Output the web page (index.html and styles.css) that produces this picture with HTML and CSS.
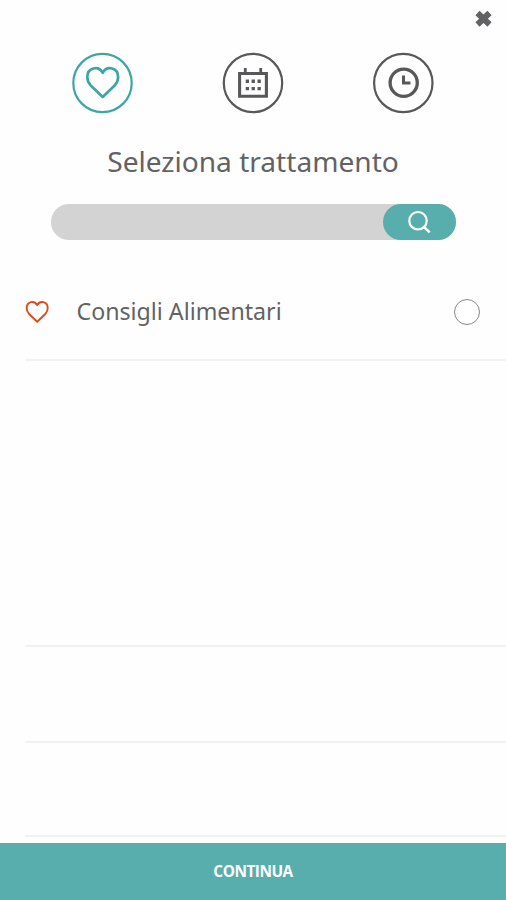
FILE: index.html
```html
<!DOCTYPE html>
<html lang="it">
<head>
<meta charset="utf-8">
<title>Seleziona trattamento</title>
<link rel="stylesheet" href="styles.css">
</head>
<body>
<div class="screen">
  <header class="topbar">
    <button class="close" aria-label="Chiudi">
      <svg width="18" height="18" viewBox="0 0 18 18"><path d="M3.5 3L15.5 14.5M15.5 3L3.5 14.5" fill="none" stroke="currentColor" stroke-width="6"/></svg>
    </button>
  </header>
  <nav class="steps">
    <div class="step active">
      <svg width="80" height="80" viewBox="0 0 80 80"><circle cx="40.5" cy="40" r="29.2" stroke-width="2.2"/><path d="M40.7 54L28.5 42.2C26.4 39.8 25.3 37.2 25.3 34C25.3 24.6 36.4 22.2 40.7 29.8C45 22.2 56.1 24.6 56.1 34C56.1 37.2 55 39.8 52.9 42.2Z" stroke-width="2.7" stroke-linejoin="round"/></svg>
    </div>
    <div class="step">
      <svg width="80" height="80" viewBox="0 0 80 80"><circle cx="40" cy="40" r="29.2" stroke-width="2.2"/><path d="M26.6 30.5H53.4V53.2H26.6Z" stroke-width="3.1"/><path d="M32.3 25V31M47.7 25V31" stroke-width="2.8"/><path d="M32.7 38.2H47.8M32.7 45.6H47.8" stroke-width="3.4" stroke-dasharray="3.3 2.6"/></svg>
    </div>
    <div class="step">
      <svg width="80" height="80" viewBox="0 0 80 80"><circle cx="40.3" cy="40" r="29.2" stroke-width="2.2"/><circle cx="40.7" cy="39.8" r="13.6" stroke-width="3.3"/><path d="M40.5 32.5V40H47.5" stroke-width="3"/></svg>
    </div>
  </nav>
  <h1 class="title">Seleziona trattamento</h1>
  <form class="search">
    <input class="search-input" type="text" aria-label="Cerca">
    <button class="search-button" type="button" aria-label="Cerca">
      <svg width="26" height="26" viewBox="0 0 26 26" fill="none" stroke="currentColor" stroke-width="2.2"><circle cx="11" cy="11.7" r="8.7"/><path d="M17 18L22.7 23.4" stroke-width="2.5"/></svg>
    </button>
  </form>
  <main class="list">
    <label class="row first">
      <svg class="heart" width="26" height="26" viewBox="0 0 26 26"><path d="M13.2 22.8L4.9 14.7C3.4 13 2.7 11.2 2.7 9C2.7 2.4 10.3 1 13.2 5.9C16.1 1 23.7 2.4 23.7 9C23.7 11.2 23 13 21.5 14.7Z" fill="none" stroke="currentColor" stroke-width="1.9" stroke-linejoin="round"/></svg>
      <span class="name">Consigli Alimentari</span>
      <input class="radio" type="radio">
    </label>
    <div class="row tall"></div>
    <div class="row middle"></div>
    <div class="row last"></div>
  </main>
  <button class="continue">CONTINUA</button>
</div>
</body>
</html>
```
FILE: styles.css
```css
* { box-sizing: border-box; }
body { margin: 0; background: #fefefe; color: #626264; font-family: "Noto Sans", sans-serif; }
button, input { font: inherit; border: 0; margin: 0; padding: 0; }
svg { display: block; }
.screen { height: 900px; display: flex; flex-direction: column; overflow: hidden; }
.topbar { height: 43px; padding: 10px 14px 0 0; display: flex; justify-content: flex-end; align-items: flex-start; }
.close { background: none; color: #626264; }
.steps { height: 80px; padding: 0 63px 0 62px; display: flex; justify-content: space-between; }
.step svg { fill: none; stroke: #58585a; }
.step.active svg { stroke: #3ca6a3; }
.title { height: 38px; margin: 19px 0 24px; text-align: center; font-size: 28.1px; line-height: 38px; font-weight: 400; }
.search { width: 405px; height: 36px; margin-left: 51px; display: flex; border-radius: 18px; background: #d3d3d3; }
.search-input { flex: 1; min-width: 0; background: transparent; outline: none; padding-left: 18px; }
.search-button { width: 73px; display: flex; align-items: center; justify-content: center; border-radius: 18px; background: #58adad; color: #fff; }
.list { margin: 24px 0 0 25px; }
.row { height: 95px; display: flex; align-items: center; border-bottom: 2px solid #f1f1f1; }
.row.first { height: 97px; }
.row.tall { height: 286px; }
.row.middle { height: 96px; }
.row.last { height: 94px; }
.heart { color: #e0491e; margin-left: -1px; }
.name { margin-left: 26.5px; flex: 1; padding-bottom: 1px; font-size: 23.2px; line-height: 32px; }
.radio { appearance: none; width: 26px; height: 26px; margin-right: 26px; border: 1.4px solid #88888a; border-radius: 50%; background: #fff; }
.continue { height: 57px; margin-top: auto; padding-bottom: 1px; background: #58adad; color: #fff; font-family: "Open Sans", sans-serif; font-size: 15.4px; font-weight: 700; letter-spacing: -0.5px; }
```
